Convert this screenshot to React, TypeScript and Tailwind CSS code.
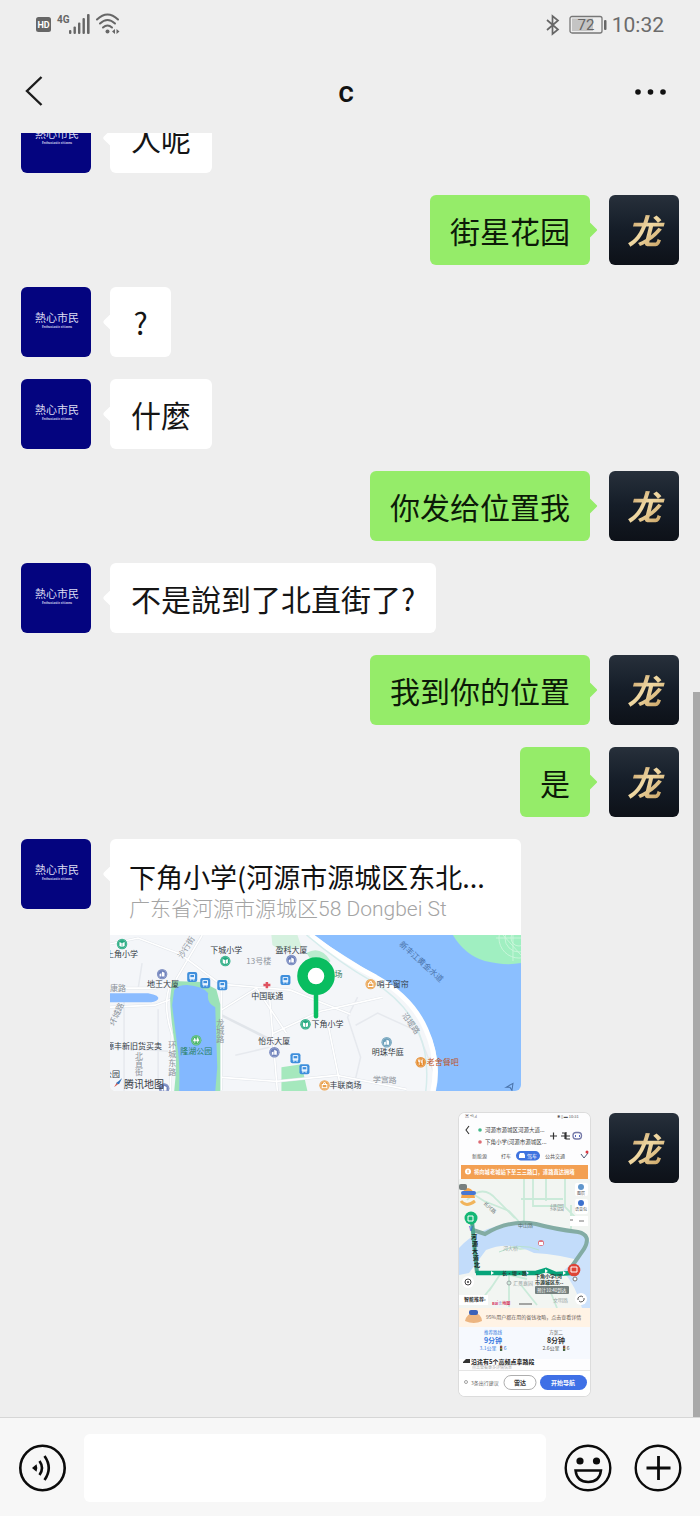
import type { ReactNode } from "react";

const poiText = "fill-[#333a44] text-[8px]";

function StatusBar() {
  return (
    <div className="flex h-[50px] items-center justify-between pr-9 pl-[35px] text-[#666]">
      <div className="flex items-center">
        <svg width="86" height="26" viewBox="0 0 86 26" aria-label="HD, 4G signal, Wi-Fi">
          <rect x="1" y="5" width="15" height="15" rx="2.5" fill="#666" />
          <text x="8.5" y="16" textAnchor="middle" className="fill-white font-[Roboto] text-[9px] font-bold">HD</text>
          <text x="22" y="11" className="fill-[#666] font-[Roboto] text-[10px] font-bold">4G</text>
          <g fill="#666">
            <rect x="34" y="18" width="2.4" height="4" rx="1" />
            <rect x="38.5" y="14.5" width="2.4" height="7.5" rx="1" />
            <rect x="43" y="10.5" width="2.4" height="11.5" rx="1" />
            <rect x="47.5" y="6" width="2.4" height="16" rx="1" />
            <rect x="52" y="2" width="2.6" height="20" rx="1" />
          </g>
          <g fill="none" stroke="#666" strokeWidth="2" strokeLinecap="round">
            <path d="M62 7.5q10.5-10 21 0" />
            <path d="M65 11.5q7.5-7 15 0" />
            <path d="M68 15.5q4.5-4 9 0" />
          </g>
          <circle cx="72.5" cy="19.5" r="2" fill="#666" />
          <path d="M80 17v5l-3-2.500zM81.500 17v5l3-2.500z" fill="#666" />
        </svg>
      </div>
      <div className="flex items-center gap-2">
        <svg width="16" height="22" viewBox="0 0 16 22" fill="none" stroke="#666" strokeWidth="1.7" aria-label="Bluetooth">
          <path d="M2 6l11 9.5-5.500 4.500V2L13 6.500 2 16" />
        </svg>
        <svg width="39" height="20" viewBox="0 0 39 20" aria-label="Battery 72">
          <rect x="1" y="1.5" width="32" height="16.5" rx="2" fill="none" stroke="#777" strokeWidth="1.3" />
          <rect x="3" y="3.5" width="21" height="12.5" fill="#c4c4c4" />
          <text x="17" y="15" textAnchor="middle" className="fill-[#666] font-[Roboto] text-[15px]">72</text>
          <rect x="35" y="5" width="2.5" height="10" rx="1" fill="#666" />
        </svg>
        <span className="-ml-1 font-[Roboto] text-[21px] leading-6 text-[#6b6b6b]">10:32</span>
      </div>
    </div>
  );
}

function Header() {
  return (
    <header className="flex h-[83px] items-center px-5">
      <button type="button" aria-label="返回" className="flex h-12 w-10 items-center">
        <svg width="26" height="34" viewBox="0 0 26 34" fill="none" stroke="#1c1c1c" strokeWidth="2.4">
          <path d="M21.500 2L7 16l14.500 14" />
        </svg>
      </button>
      <h1 className="flex-1 text-center font-[Roboto] text-[30px] leading-8 font-medium text-[#111]">c</h1>
      <button type="button" aria-label="更多" className="flex h-12 w-12 items-center">
        <svg width="36" height="8" viewBox="0 0 36 8" fill="#111">
          <circle cx="6" cy="4" r="2.800" />
          <circle cx="18.5" cy="4" r="2.800" />
          <circle cx="31" cy="4" r="2.800" />
        </svg>
      </button>
    </header>
  );
}

function CitizenAvatar() {
  return (
    <div className="flex size-[70px] shrink-0 flex-col items-center rounded-md bg-[#04047f] pt-[23px] pl-0.5 text-white">
      <span className="text-[11px] leading-[15px] text-[#dcdcf2]">熱心市民</span>
      <span className="text-[3px] leading-[4px] font-bold text-[#d0d0ee]">Enthusiastic citizens</span>
    </div>
  );
}

function DragonAvatar() {
  return (
    <div className="flex size-[70px] shrink-0 items-center justify-center rounded-md bg-linear-to-b from-[#27303b] via-[#151d28] to-[#0d1118]">
      <span className="bg-linear-to-br from-[#a9793c] via-[#f0d9a4] to-[#c39a58] bg-clip-text px-1 text-[34px] leading-10 font-semibold text-transparent italic">龙</span>
    </div>
  );
}

function Incoming({ children }: { children: ReactNode }) {
  return (
    <li className="flex items-start gap-[19px] px-[21px]">
      <CitizenAvatar />
      <div className="relative">
        <span className="absolute top-[29px] -left-[5px] size-3 rotate-45 rounded-[2px] bg-white" />
        {children}
      </div>
    </li>
  );
}

function Outgoing({ children }: { children: ReactNode }) {
  return (
    <li className="flex items-start justify-end gap-[19px] px-[21px]">
      {children}
      <DragonAvatar />
    </li>
  );
}

function IncomingText({ text }: { text: string }) {
  return (
    <Incoming>
      <p className="relative min-w-[61px] rounded-md bg-white px-[21px] py-[15px] text-center text-[30px] leading-10 text-[#151515]">{text}</p>
    </Incoming>
  );
}

function OutgoingText({ text }: { text: string }) {
  return (
    <Outgoing>
      <div className="relative">
        <span className="absolute top-[29px] -right-[5px] size-3 rotate-45 rounded-[1px] bg-[#95ec69]" />
        <p className="relative rounded-md bg-[#95ec69] px-5 py-[15px] text-[30px] leading-10 text-[#0c1a08]">{text}</p>
      </div>
    </Outgoing>
  );
}

function BusStop({ x, y }: { x: number; y: number }) {
  return (
    <g transform={`translate(${x} ${y})`}>
      <rect x="-5" y="-5" width="10" height="10" rx="2" fill="#3f8fdc" />
      <rect x="-2.800" y="-3.200" width="5.600" height="5.600" rx="1" fill="#e8f3ff" />
      <rect x="-1.800" y="-2.200" width="3.600" height="2.200" fill="#3f8fdc" />
      <path d="M-2.200 3h1.200M1 3h1.200" stroke="#e8f3ff" />
    </g>
  );
}

function Poi({ x, y, color, kind = "book" }: { x: number; y: number; color: string; kind?: "book" | "building" | "bag" | "food" | "park" }) {
  return (
    <g transform={`translate(${x} ${y})`}>
      <circle r="5.200" fill={color} />
      <circle r="4.300" fill="none" stroke="#fff" strokeOpacity="0.5" strokeWidth="0.5" />
      {kind === "book" && <path d="M-2.600-2L-.3-1v4l-2.300-1zM2.600-2L.3-1v4l2.300-1z" fill="#fff" />}
      {kind === "building" && <path d="M-2.600 2.400V0l1.800-.8V2.400zM-.2 2.400v-5l2.600 1.200v3.800z" fill="#fff" />}
      {kind === "bag" && <path d="M-2.300-.8h4.600v3.200h-4.600zM-1.200-.8q0-2 1.200-2t1.200 2" fill="none" stroke="#fff" />}
      {kind === "food" && <path d="M-1.500-2.800v5.600M-2.300-2.800v2h1.600v-2M1.500 2.800v-5.600q-1 1-1 3h1" fill="none" stroke="#fff" strokeWidth="0.8" />}
      {kind === "park" && <path d="M-1.500 2.800v-2M1.300 2.800v-2M-2.800.8l1.300-3 1.200 3zM.2.8l1.200-3.500L2.800.8z" fill="#fff" stroke="#fff" strokeWidth="0.6" />}
    </g>
  );
}

function LocationMap() {
  return (
    <svg viewBox="0 0 410 156" className="block w-full" role="img" aria-label="下角小学地图">
      <rect width="410" height="156" fill="#f4f6f9" />
      <path d="M161 0h26l4 12-20 4-9-6z" fill="#d5f1df" />
      <path d="M196 18q14-8 24 8l-12 10z" fill="#b9ecce" />
      <path d="M171 132l20-3 6 27h-26z" fill="#a5e8bd" />
      <g fill="none" stroke="#e1e5ea" strokeWidth="2.600">
        <path d="M0 9l28-6 42 16 40 30 70 6 60 24" />
        <path d="M0 53h45l22-8M0 72l45-2 16-6M66 44L92 0" />
        <path d="M60 50q-8 20 2 50l-2 56M111 55v100M159 60l8 96" />
        <path d="M111 75l35-22 30 45M111 80l52 26M163 98l47-22 62-14" />
        <path d="M111 142l55 4 60-6 70 14M218 92l13 64" />
      </g>
      <g fill="none" stroke="#e6e9ee" strokeWidth="1.500">
        <path d="M247 62l-10 20 13 40-8 34" />
        <path d="M245 90l22-12 40 18 18 46" />
        <path d="M32 28l-4 26M14 60v96M48 74v80M0 112l58 4M125 120l34-8" />
      </g>
      <g fill="none" stroke="#fff" strokeWidth="1.600">
        <path d="M0 9l28-6 42 16 40 30 70 6 60 24M0 53h45l22-8M0 72l45-2 16-6M66 44L92 0" />
        <path d="M60 50q-8 20 2 50l-2 56M111 55v100M159 60l8 96M163 98l47-22 62-14" />
        <path d="M111 75l35-22 30 45M111 142l55 4 60-6 70 14M218 92l13 64" />
      </g>
      <path d="M0 58h38q12 2 10 6-4 4-14 3H0z" fill="#8bbcff" />
      <path d="M62 46l30 1 14 7 4 15v87H64q3-24 1-45-5-30-5-48z" fill="#9be2b8" />
      <path d="M64 55q3-5 13-5 15 1 21 8-2 10 7 14l2 60-2 24H69q1-29-2-46l-5-40z" fill="#83b8ff" />
      <path d="M202 0h208v156H325q7-30-8-62-16-33-52-54-30-18-63-40z" fill="#8bbfff" />
      <path d="M200 0q33 26 65 42 36 20 50 52 14 31 7 62" fill="none" stroke="#fff" strokeWidth="5" />
      <path d="M196 0q33 28 65 46 34 20 47 51 11 26 7 59" fill="none" stroke="#d6ecec" strokeWidth="1.5" />
      <path d="M342 0q12 20 32 26 20 5 36 2V0z" fill="#a0efc1" />
      <g fill="none" stroke="#d0f8df" strokeWidth="0.8">
        <circle cx="408" cy="3" r="8" />
        <circle cx="408" cy="3" r="14" />
        <circle cx="408" cy="3" r="20" />
        <path d="M385 3h25M402 0v26M392 0l18 20" />
      </g>
      <Poi x={12} y={9} color="#23a97f" />
      <Poi x={52} y={39} color="#6c7fba" kind="building" />
      <Poi x={115} y={26} color="#23a97f" />
      <Poi x={181} y={25} color="#6c7fba" kind="building" />
      <Poi x={86} y={105} color="#4ab66b" kind="park" />
      <Poi x={164} y={117} color="#6c7fba" kind="building" />
      <Poi x={195} y={89} color="#23a97f" />
      <Poi x={260} y={49} color="#e9a04b" kind="bag" />
      <Poi x={276} y={107} color="#6c9fba" kind="building" />
      <Poi x={310} y={127} color="#e58b2d" kind="food" />
      <Poi x={214} y={150} color="#e9a04b" kind="bag" />
      <Poi x={54} y={153} color="#6c7fba" kind="building" />
      <BusStop x={82} y={42} />
      <BusStop x={95} y={48} />
      <BusStop x={112} y={50} />
      <BusStop x={175} y={45} />
      <BusStop x={185} y={123} />
      <BusStop x={194} y={134} />
      <path d="M153 50h7M156.500 47v6" stroke="#df5260" strokeWidth="2.500" />
      <g className={poiText}>
        <text x="-4" y="22">上角小学</text>
        <text x="37" y="52">地王大厦</text>
        <text x="100" y="18">下城小学</text>
        <text x="165" y="18">盈科大厦</text>
        <text x="141" y="64">中国联通</text>
        <text x="201" y="92">下角小学</text>
        <text x="148" y="109">怡乐大厦</text>
        <text x="-4" y="114">源丰新旧货买卖</text>
        <text x="266" y="52">哨子窗帘</text>
        <text x="261" y="120">明珠华庭</text>
        <text x="219" y="153">丰联商场</text>
        <text x="-6" y="142">公园</text>
      </g>
      <text x="224" y="42" className="fill-[#3b805c] text-[8px]">场</text>
      <text x="70" y="119" className="fill-[#26805d] text-[8px]">隆湖公园</text>
      <text x="316" y="130" className="fill-[#bd5527] text-[8px]">老舍餐吧</text>
      <g className="fill-[#8c939b] text-[8px]">
        <text x="136" y="29">13号楼</text>
        <text x="0" y="56">康路</text>
        <text x="25" y="124">北</text>
        <text x="25" y="132">直</text>
        <text x="25" y="140">街</text>
        <text x="58" y="113">环</text>
        <text x="58" y="122">城</text>
        <text x="58" y="131">东</text>
        <text x="58" y="140">路</text>
        <text x="106" y="91">龙</text>
        <text x="106" y="99">城</text>
        <text x="106" y="107">路</text>
        <text transform="translate(72 24) rotate(-58)">沙行街</text>
        <text transform="translate(4 91) rotate(-65)">环城路</text>
        <text transform="translate(291 80) rotate(55)">沿堤路</text>
        <text x="262" y="147" transform="rotate(2 262 147)">学宫路</text>
      </g>
      <text transform="translate(288 10) rotate(42)" className="fill-[#4a73aa] text-[8px]">新丰江黄金水道</text>
      <path d="M395 152l7-4-1 7-2-3z" fill="none" stroke="#4a73aa" />
      <path d="M4 152l4-3-1-2z" fill="#d55a4f" />
      <path d="M6 148l6-5-3 6z" fill="#2c70bd" />
      <text x="14" y="153" className="fill-[#3a4048] text-[10px]">腾讯地图</text>
      <path d="M205.500 58v23" stroke="#09bd60" strokeWidth="4.500" strokeLinecap="round" />
      <circle cx="205.5" cy="41" r="13.500" fill="#fff" stroke="#09bd60" strokeWidth="10.500" />
    </svg>
  );
}

function LocationCard() {
  return (
    <Incoming>
      <a href="#location" className="relative block w-[411px] overflow-hidden rounded-md bg-white">
        <span className="block px-[19px] pt-5">
          <span className="block text-[27px] leading-9 whitespace-nowrap text-[#111]">下角小学(河源市源城区东北...</span>
          <span className="block pb-3 font-[Roboto,'Noto_Sans_CJK_SC',sans-serif] text-[21px] leading-7 font-light whitespace-nowrap text-[#a4a4a4]">
            广东省河源市源城区58 Dongbei St
          </span>
        </span>
        <LocationMap />
      </a>
    </Incoming>
  );
}

function RouteScreenshot() {
  return (
    <button type="button" aria-label="查看图片" className="block w-[131px] overflow-hidden rounded-md bg-white ring-1 ring-[#dcdcdc]">
      <svg viewBox="0 0 131 283" className="block w-full">
        <rect width="131" height="283" fill="#fdfdfe" />
        <g className="fill-[#555] text-[4px]">
          <text x="6" y="5">▣ ⁴ᴳ.ıl</text>
          <text x="98" y="5">✱ ▯ ▬ 10:31</text>
        </g>
        <path d="M10 13l-3 4 3 4" fill="none" stroke="#333" strokeWidth="1.1" />
        <circle cx="21" cy="17" r="1.8" fill="#43b98a" />
        <circle cx="21" cy="29" r="1.8" fill="#dd6b74" />
        <g className="fill-[#444] text-[5.5px]">
          <text x="26" y="19">河源市源城区河源大道...</text>
          <text x="26" y="31">下角小学(河源市源城区...</text>
        </g>
        <path d="M91 23h7M94.500 19.500v7" stroke="#333" strokeWidth="1.2" />
        <path d="M103 20h3v6M107 19v7h4M102 23h9" fill="none" stroke="#333" strokeWidth="1.2" />
        <rect x="114" y="19.500" width="8.500" height="6.500" rx="3" fill="none" stroke="#767aa8" strokeWidth="1.300" />
        <path d="M116.500 22v2M120.500 22v2" stroke="#5268c1" />
        <rect x="57" y="38" width="24" height="9.500" rx="4.700" fill="#3f73df" />
        <path d="M60 42l1-2h4l1 2v3h-6z" fill="#fff" />
        <g className="text-[5px]">
          <text x="13" y="45" className="fill-[#555]">新能源</text>
          <text x="42" y="45" className="fill-[#555]">打车</text>
          <text x="68" y="45" className="fill-white">驾车</text>
          <text x="86" y="45" className="fill-[#555]">公共交通</text>
        </g>
        <path d="M122 41l3 4 4-5" fill="none" stroke="#4d5a76" />
        <circle cx="128" cy="39" r="1.5" fill="#dd3944" />
        <path d="M2 52h127v14H2z" fill="#f3a053" />
        <circle cx="9" cy="58.5" r="3" fill="#fff" />
        <path d="M9 57v3" stroke="#f3a053" />
        <text x="15" y="61" className="fill-white text-[5.3px] font-bold">将向城老城站下至三三路口，道路直达拥堵</text>
        <rect y="66" width="131" height="129" fill="#f2f5f2" />
        <g fill="none" stroke="#caead9" strokeWidth="1.8">
          <path d="M65 66v41l-6 20M74 66v27h30M87 66v22M106 66v28l10 10M62 86h42M112 92v30M0 72l25 16 25 10 15 16" />
          <path d="M8 87q16-17 30 0l18 18M15 140l26-12 20 8 30-4M30 178l12-18 26 6M62 172l16 20M88 170l10 25M50 158v36M20 190l14-18" />
        </g>
        <path d="M0 135q24-26 68-24 26 0 62 14v25q-30-9-55-10-25-13-48-3L10 160l-10 2z" fill="#c2dcfa" />
        <path d="M104 158q20-16 27-30v67h-8q-6-22-19-37z" fill="#cde2fb" />
        <path d="M40 139q22-10 40-2" fill="none" stroke="#b7e2cd" />
        <path d="M14 117l12 4q25-15 51-10 18 5 42 8 14 3 6 17l-14 20" fill="none" stroke="#83aca4" strokeWidth="4" />
        <path d="M13 108l5 52" stroke="#4fa58e" strokeWidth="4" />
        <path d="M17 160h60l10-3 10 4 16-1" fill="none" stroke="#07a47a" strokeWidth="4.5" />
        <path d="M32 158l3 2-3 2zM67 158l3 2-3 2zM86 156l3 2-3 2zM104 158l3 2-3 2z" fill="#fff" />
        <circle cx="12" cy="105" r="6.5" fill="#14b775" />
        <path d="M9 103h5v5H9z" fill="none" stroke="#fff" />
        <text x="10" y="118" className="fill-[#3672df] text-[6px] font-bold">V</text>
        <g className="fill-[#16221f] text-[6px] font-bold">
          <text x="12" y="126">河</text>
          <text x="13" y="133">源</text>
          <text x="13" y="140">大</text>
          <text x="14" y="147">道</text>
          <text x="15" y="154">北</text>
        </g>
        <g className="fill-[#2c3936] text-[5px] font-bold">
          <text x="43" y="162">长·堤·路</text>
          <text x="76" y="165">下角小学(河</text>
          <text x="76" y="171">市源城区东..</text>
        </g>
        <g className="fill-[#9ba6a6] text-[5px]">
          <text x="91" y="97" className="text-[7px]">绿园</text>
          <text x="44" y="137">河大桥</text>
          <circle cx="50" cy="170" r="2" fill="none" stroke="#9ba6a6" />
          <text x="54" y="172">汇景嘉园</text>
          <text x="94" y="189">文明路</text>
          <text transform="translate(24 91) rotate(42)" className="fill-[#6a7574]">长兴路</text>
          <text x="59" y="114" className="fill-[#56706b]">中山路</text>
        </g>
        <path d="M2 85q1-9 7-10 6 1 7 10z" fill="#f3a54c" />
        <rect x="2" y="78" width="15" height="4" rx="2" fill="#4777d3" />
        <path d="M2 88q5 7 14 0" fill="none" stroke="#f1b45b" strokeWidth="3" />
        <rect x="0" y="71" width="8" height="6" rx="2" fill="#777f7e" />
        <rect x="116" y="70" width="13" height="13" rx="2" fill="#fff" />
        <rect x="116" y="86" width="13" height="15" rx="2" fill="#fff" />
        <circle cx="122" cy="74" r="3" fill="#6096cb" />
        <circle cx="122" cy="90" r="3" fill="#3c70ce" />
        <text x="118" y="82" className="fill-[#555] text-[4px]">图层</text>
        <text x="116" y="98" className="fill-[#555] text-[4px]">语音包</text>
        <rect x="111" y="103" width="18" height="10" fill="#fff" />
        <path d="M120 108h5M111 107h3" stroke="#777" />
        <circle cx="82" cy="130" r="3" fill="#de7480" />
        <path d="M80 129h4v3h-4z" fill="#fff" />
        <circle cx="115" cy="157" r="6.3" fill="#de4436" />
        <path d="M112 154h6v5h-6z" fill="none" stroke="#fff" />
        <circle cx="116" cy="166" r="2" fill="#fff" stroke="#777" />
        <rect x="76" y="173" width="34" height="8" rx="1" fill="#75807e" />
        <text x="78" y="179" className="fill-white text-[4.5px]">预计10:40到达</text>
        <circle cx="9" cy="169" r="6" fill="#fff" />
        <circle cx="9" cy="169" r="3" fill="none" stroke="#444" />
        <circle cx="9" cy="169" r="1" fill="#444" />
        <path d="M0 182h29v10H0z" fill="#fff" />
        <text x="5" y="188" className="fill-[#333] text-[5px] font-bold">智能推荐›</text>
        <text x="33" y="192" className="fill-[#d53762] text-[4px] font-bold">Bai<tspan className="fill-[#4760d1]">❀</tspan>地图</text>
        <path d="M60 191h13" stroke="#555" />
        <circle cx="122" cy="186" r="6" fill="#fff" />
        <path d="M119 187a3 3 0 015-3M125 185a3 3 0 01-5 3" fill="none" stroke="#555" />
        <path d="M0 195h131v19H0z" fill="#fff3e5" />
        <path d="M6 208q2-8 9-8t8 8q-8 4-17 0z" fill="#ecb581" />
        <rect x="10" y="197" width="9" height="5" rx="2" fill="#3c62b9" />
        <text x="27" y="206" className="fill-[#6c6259] text-[5px]">95%用户都在用的省钱攻略，点击查看详情</text>
        <path d="M0 214h131v32H0z" fill="#f6f9fe" />
        <g textAnchor="middle">
          <text x="34" y="221" className="fill-[#387be1] text-[4.5px]">推荐路线</text>
          <text x="34" y="230" className="fill-[#3979df] text-[7px] font-bold">9分钟</text>
          <text x="34" y="237" className="fill-[#3979df] text-[5px]">3.1公里 🚦6</text>
          <text x="97" y="221" className="fill-[#666] text-[4.5px]">方案二</text>
          <text x="97" y="230" className="fill-[#333] text-[7px] font-bold">8分钟</text>
          <text x="97" y="237" className="fill-[#555] text-[5px]">2.6公里 🚦6</text>
        </g>
        <path d="M4 249l3-3h4v4H4z" fill="#333" />
        <text x="12" y="251" className="fill-[#222] text-[6px] font-bold">沿途有5个高频点拿路段</text>
        <text x="13" y="256" className="fill-[#aaa] text-[4px]">点击查看更多详情信息</text>
        <path d="M0 258h131v25H0z" fill="#fff" />
        <path d="M0 257.500h131" stroke="#e5e5e5" />
        <circle cx="7" cy="269" r="1.5" fill="none" stroke="#666" strokeWidth="0.6" />
        <text x="12" y="272" className="fill-[#666] text-[5px]">3条出行建议</text>
        <rect x="45" y="262.5" width="32" height="14" rx="7" fill="#fff" stroke="#999" strokeWidth="0.8" />
        <text x="61" y="271.5" textAnchor="middle" className="fill-[#333] text-[6px] font-bold">雷达</text>
        <rect x="81" y="262" width="47" height="15" rx="7.5" fill="#3f70e6" />
        <text x="104" y="272" textAnchor="middle" className="fill-white text-[6px] font-bold">开始导航</text>
      </svg>
    </button>
  );
}

function Composer() {
  return (
    <footer className="flex items-center gap-[18px] border-t border-[#d6d6d6] bg-[#f7f7f7] px-[18px] pt-4 pb-[14px]">
      <button type="button" aria-label="语音输入" className="shrink-0">
        <svg width="48" height="48" viewBox="0 0 48 48" fill="none" stroke="#0b0b0b" strokeWidth="2.6">
          <circle cx="24.5" cy="24" r="22.2" />
          <path d="M14 24l4.500-3.800q1.600 3.800 0 7.600z" fill="#0b0b0b" stroke="none" />
          <path d="M21.500 17q5 7 0 14M26.500 12q8.500 12 0 24" />
        </svg>
      </button>
      <input type="text" aria-label="消息" className="h-[68px] min-w-0 flex-1 rounded-md bg-white px-4 text-[28px] outline-none" />
      <div className="flex shrink-0 gap-[22px]">
        <button type="button" aria-label="表情">
          <svg width="48" height="48" viewBox="0 0 48 48" fill="none" stroke="#0b0b0b" strokeWidth="2.4">
            <circle cx="24" cy="24" r="22.3" />
            <circle cx="16" cy="17" r="3.6" fill="#0b0b0b" stroke="none" />
            <circle cx="32.5" cy="17" r="3.6" fill="#0b0b0b" stroke="none" />
            <path d="M11.500 26.500h25.500q-1.500 11.500-12.750 11.500t-12.750-11.500z" />
          </svg>
        </button>
        <button type="button" aria-label="更多功能">
          <svg width="48" height="48" viewBox="0 0 48 48" fill="none" stroke="#0b0b0b" strokeWidth="2.4">
            <circle cx="24" cy="24" r="22.3" />
            <path d="M12.500 24h24M24.500 12v24" strokeWidth="2.8" />
          </svg>
        </button>
      </div>
    </footer>
  );
}

export default function App() {
  return (
    <div className="flex min-h-screen flex-col bg-[#eee] font-['Noto_Sans_CJK_SC',sans-serif]">
      <StatusBar />
      <Header />
      <main className="relative flex-1 overflow-hidden">
        <ul className="-mt-[30px] flex flex-col gap-[22px] pb-[21px]">
          <IncomingText text="人呢" />
          <OutgoingText text="街星花园" />
          <IncomingText text="?" />
          <IncomingText text="什麼" />
          <OutgoingText text="你发给位置我" />
          <IncomingText text="不是說到了北直街了?" />
          <OutgoingText text="我到你的位置" />
          <OutgoingText text="是" />
          <LocationCard />
          <Outgoing>
            <RouteScreenshot />
          </Outgoing>
        </ul>
        <div className="absolute top-[559px] right-0 bottom-0 w-[7px] bg-[#a9a9a9]" />
      </main>
      <Composer />
    </div>
  );
}
